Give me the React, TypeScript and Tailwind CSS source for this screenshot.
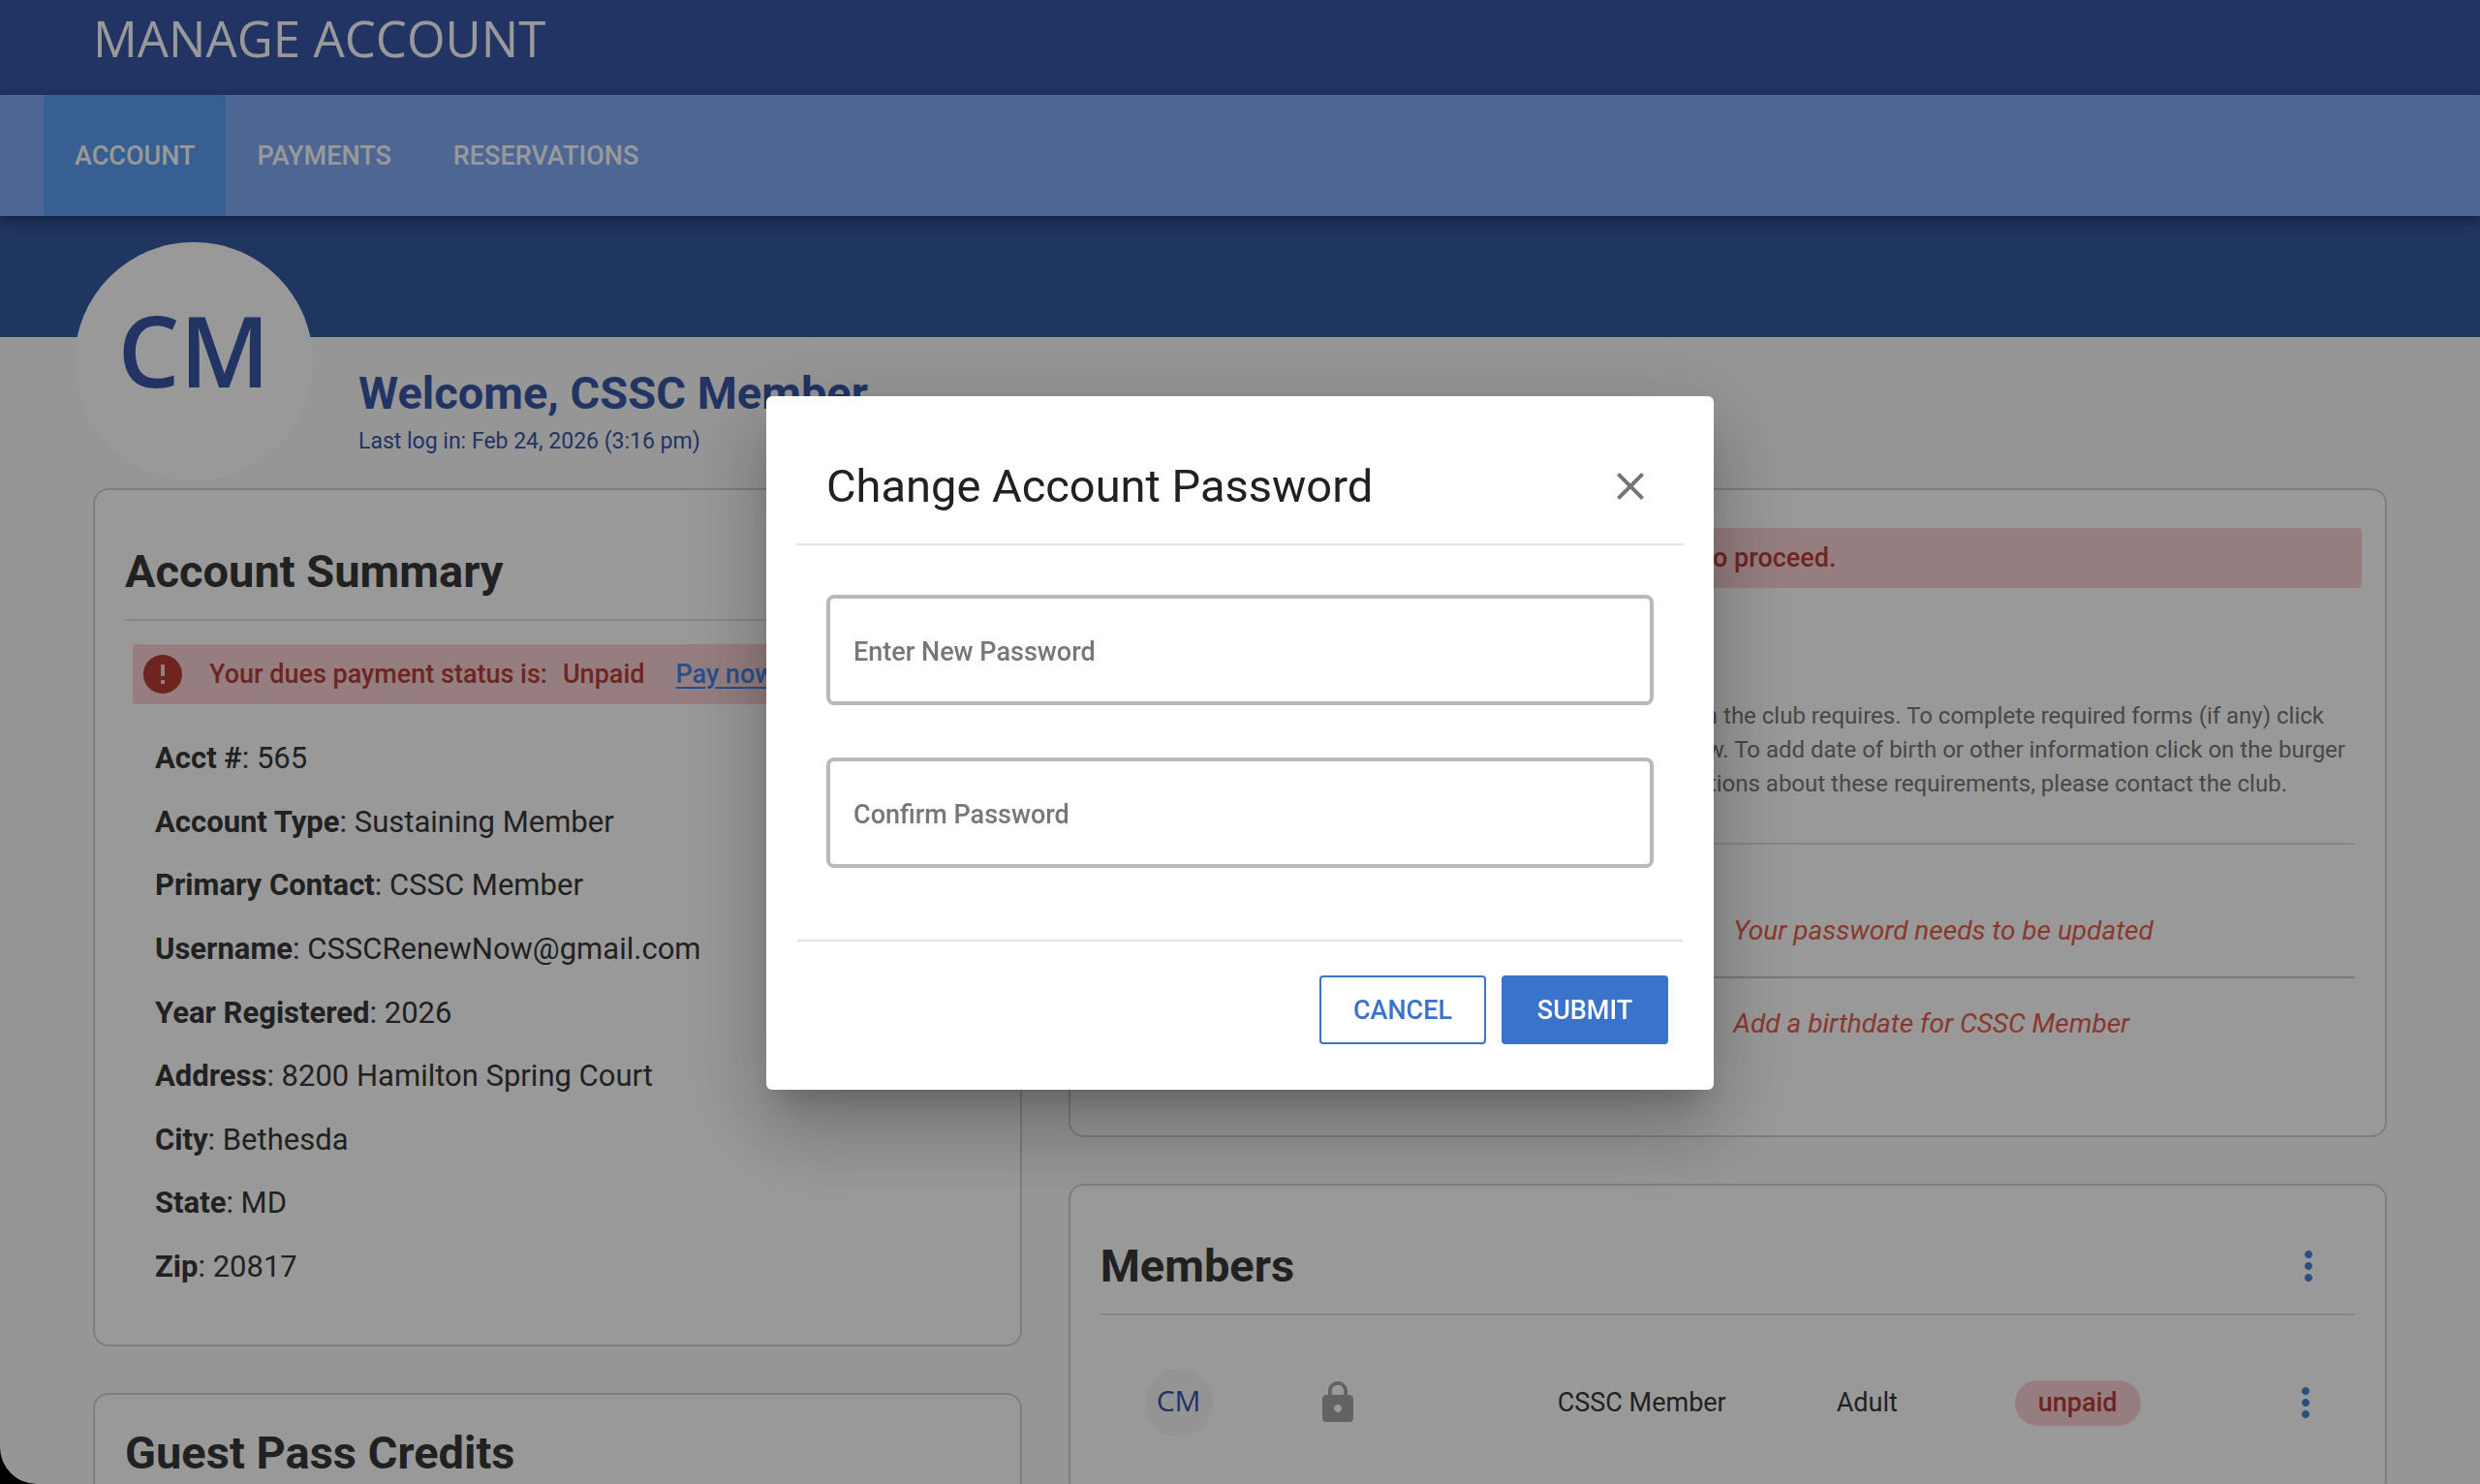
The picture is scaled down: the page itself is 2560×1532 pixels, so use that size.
import { MdClose, MdError, MdLock, MdMoreVert } from "react-icons/md";
import type { ReactNode } from "react";

const tabs = ["ACCOUNT", "PAYMENTS", "RESERVATIONS"];

const details = [
  ["Acct #", "565"],
  ["Account Type", "Sustaining Member"],
  ["Primary Contact", "CSSC Member"],
  ["Username", "CSSCRenewNow@gmail.com"],
  ["Year Registered", "2026"],
  ["Address", "8200 Hamilton Spring Court"],
  ["City", "Bethesda"],
  ["State", "MD"],
  ["Zip", "20817"],
];

function Card({ className, children }: { className: string; children: ReactNode }) {
  return (
    <section className={`rounded-2xl border-2 border-[#d2d2d2] bg-white px-[31px] ${className}`}>
      {children}
    </section>
  );
}

function Alert({ className, children }: { className: string; children: ReactNode }) {
  return (
    <div
      className={`flex h-[62px] items-center overflow-hidden rounded bg-[#fad2d5] pl-[7px] font-medium whitespace-nowrap text-[#b73e39] ${className}`}
    >
      <MdError className="mr-6 size-12 shrink-0" />
      {children}
    </div>
  );
}

function Header() {
  return (
    <header>
      <div className="flex h-[98px] items-center bg-[#3757a5] px-24 pb-5">
        <h1 className="font-['Open_Sans',sans-serif] text-[51px] leading-none text-white">MANAGE ACCOUNT</h1>
      </div>
      <nav className="relative flex h-[125px] bg-[#80abf5] pl-[45px] shadow-[0_4px_8px_-2px_rgba(0,0,0,0.2),0_8px_10px_rgba(0,0,0,0.14),0_2px_20px_rgba(0,0,0,0.12)]">
        {tabs.map((tab, i) => (
          <a
            key={tab}
            href="#"
            className={`flex items-center rounded px-8 font-medium text-white ${i === 0 ? "bg-[#5c9ef2]" : ""}`}
          >
            {tab}
          </a>
        ))}
      </nav>
    </header>
  );
}

function Welcome() {
  return (
    <div className="bg-linear-to-b from-[#355aa0] from-[125px] to-transparent to-[125px]">
      <div className="flex px-[77px] pt-[27px] text-[#3757a5]">
        <div className="flex size-[246px] shrink-0 items-center justify-center rounded-full bg-white pb-6 font-['Open_Sans',sans-serif] text-[101px] font-semibold">
          CM
        </div>
        <div className="pt-[124px] pl-[47px]">
          <h2 className="text-[47px] leading-[64px] font-bold">Welcome, CSSC Member</h2>
          <p className="text-[23px] leading-9">Last log in: Feb 24, 2026 (3:16 pm)</p>
        </div>
      </div>
    </div>
  );
}

function AccountSummary() {
  return (
    <Card className="pb-[59px]">
      <h2 className="border-b-2 border-[#e0e0e0] pt-[56px] pb-[21px] text-[47px] leading-[56px] font-bold">
        Account Summary
      </h2>
      <Alert className="mx-2 mt-6">
        <span>Your dues payment status is:</span>
        <span className="ml-4">Unpaid</span>
        <a href="#" className="ml-8 text-[#4185ee] underline underline-offset-4">
          Pay now
        </a>
      </Alert>
      <ul className="mt-[35px] flex min-h-[567px] flex-col justify-between px-[31px] text-[31px] leading-[42px]">
        {details.map(([label, value]) => (
          <li key={label}>
            <b>{label}</b>: {value}
          </li>
        ))}
      </ul>
    </Card>
  );
}

function Requirements() {
  return (
    <Card className="h-[670px] pt-[39px]">
      <Alert className="-mr-[7px] -ml-3">
        <span>You must complete the account requirements to proceed.</span>
      </Alert>
      <h2 className="mt-6 text-[47px] leading-[56px] font-bold">Requirements</h2>
      <p className="mt-[35px] border-b-2 border-[#e0e0e0] pb-[43px] text-right text-2xl leading-[35px] text-[#777]">
        <span className="block pr-8">
          This section lists the forms and information on the club requires. To complete required forms (if any) click
        </span>
        <span className="block pr-[10px]">
          on the form link below. To add date of birth or other information click on the burger
        </span>
        <span className="block pr-[70px]">
          menu. If you have questions about these requirements, please contact the club.
        </span>
      </p>
      <ul className="mt-[42px] text-[28px] text-[#e65d4d] italic">
        <li className="grid h-24 grid-cols-2 items-center gap-3 border-b-2 border-[#c8c8c8]">
          <span>Password</span>
          <span>Your password needs to be updated</span>
        </li>
        <li className="grid h-[94px] grid-cols-2 items-center gap-3">
          <span>Birthdate</span>
          <span>Add a birthdate for CSSC Member</span>
        </li>
      </ul>
    </Card>
  );
}

function Members() {
  return (
    <Card className="pb-12">
      <div className="flex items-center justify-between border-b-2 border-[#e0e0e0] pt-[55px] pr-6 pb-[21px]">
        <h2 className="text-[47px] leading-[56px] font-bold">Members</h2>
        <button type="button" aria-label="Members menu" className="text-[#4582d8]">
          <MdMoreVert className="size-12" />
        </button>
      </div>
      <table className="mt-11 w-full table-fixed text-left">
        <colgroup>
          <col className="w-[229px]" />
          <col className="w-[243px]" />
          <col className="w-[288px]" />
          <col className="w-[184px]" />
          <col />
          <col className="w-[75px]" />
        </colgroup>
        <tbody>
          <tr className="h-[92px]">
            <td className="pl-[46px]">
              <span className="flex size-[70px] items-center justify-center rounded-full bg-[#f7f7f7] pb-1 font-['Open_Sans',sans-serif] text-[30px] text-[#3757a5]">
                CM
              </span>
            </td>
            <td>
              <MdLock aria-label="Locked" className="-ml-2 size-12 text-[#a5a5a5]" />
            </td>
            <td>CSSC Member</td>
            <td>Adult</td>
            <td>
              <span className="inline-block rounded-full bg-[#fad2d5] px-6 leading-[47px] font-medium text-[#b73e39]">
                unpaid
              </span>
            </td>
            <td>
              <button type="button" aria-label="CSSC Member menu" className="block text-[#4582d8]">
                <MdMoreVert className="size-12" />
              </button>
            </td>
          </tr>
        </tbody>
      </table>
    </Card>
  );
}

function PasswordDialog() {
  return (
    <div className="fixed inset-0 flex items-center justify-center bg-black/40 pt-0.5">
      <form
        role="dialog"
        aria-modal="true"
        aria-labelledby="dialog-title"
        className="w-[978px] rounded-md bg-white px-8 pb-[47px] shadow-[0_22px_30px_-14px_rgba(0,0,0,0.2),0_48px_76px_6px_rgba(0,0,0,0.14),0_18px_92px_16px_rgba(0,0,0,0.12)]"
      >
        <div className="flex items-center justify-between border-b-2 border-[#e4e4e4] px-[30px] pt-[62px] pb-7">
          <h2 id="dialog-title" className="text-[47px] leading-[62px] text-[#212121]">
            Change Account Password
          </h2>
          <button type="button" aria-label="Close" className="text-[#757575]">
            <MdClose className="size-12" />
          </button>
        </div>
        <div className="flex flex-col gap-[54px] border-b-2 border-[#e4e4e4] px-[30px] pt-[51px] pb-[74px]">
          <input
            type="password"
            aria-label="Enter New Password"
            placeholder="Enter New Password"
            className="h-[114px] w-full rounded-lg border-4 border-[#b9b9b9] px-6 pt-1 font-medium placeholder:text-[#777]"
          />
          <input
            type="password"
            aria-label="Confirm Password"
            placeholder="Confirm Password"
            className="h-[114px] w-full rounded-lg border-4 border-[#b9b9b9] px-6 pt-1 font-medium placeholder:text-[#777]"
          />
        </div>
        <div className="flex justify-end gap-4 pt-[35px] pr-[15px] font-medium">
          <button type="button" className="h-[71px] w-[172px] rounded border-2 border-[#3973cc] text-[#3973cc]">
            CANCEL
          </button>
          <button type="submit" className="h-[71px] w-[172px] rounded bg-[#3973cc] text-white">
            SUBMIT
          </button>
        </div>
      </form>
    </div>
  );
}

export default function App() {
  return (
    <div className="relative h-screen overflow-hidden bg-black font-[Roboto,sans-serif] text-[27px] leading-10 text-[#383838]">
      <div className="h-full overflow-hidden rounded-bl-[38px] bg-[#fafafa]">
        <Header />
        <Welcome />
        <main className="grid grid-cols-12 items-start gap-12 px-24 pt-2">
          <div className="col-span-5 flex flex-col gap-12">
            <AccountSummary />
            <Card className="pb-12">
              <h2 className="border-b-2 border-[#e0e0e0] pt-8 pb-[21px] text-[47px] leading-[56px] font-bold">
                Guest Pass Credits
              </h2>
            </Card>
          </div>
          <div className="col-span-7 flex flex-col gap-12">
            <Requirements />
            <Members />
          </div>
        </main>
      </div>
      <PasswordDialog />
    </div>
  );
}
